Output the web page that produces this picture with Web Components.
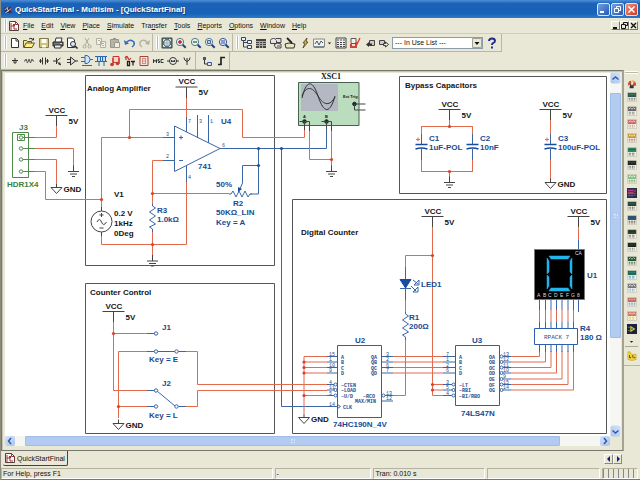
<!DOCTYPE html>
<html lang="en">
<head>
<meta charset="utf-8">
<title>QuickStartFinal - Multisim</title>
<style>
html,body{margin:0;height:100%}
body{--face:#e9e7d6;--line:#b3b09c;font:7px "Liberation Sans",Arial,sans-serif;color:#111;background:var(--face)}
</style>
</head>
<body>
<sim-app></sim-app>
<script>
const base = `*{box-sizing:border-box}
button{font:inherit;color:inherit;background:none;border:0;padding:0;margin:0;display:flex;align-items:center;justify-content:center}
svg{display:block}`;
function define(name, css, html, setup) {
  const t = document.createElement('template');
  customElements.define(name, class extends HTMLElement {
    constructor() {
      super();
      t.innerHTML = `<style>${base}${css}</style>${typeof html === 'function' ? html(this) : html}`;
      this.attachShadow({mode: 'open'}).append(t.content.cloneNode(true));
      if (setup) setup(this);
    }
  });
}

/* ---- icons, 12 x 12 ---- */
const lens = (inner, c = '#56738c') => `<circle cx="5" cy="5" r="3.6" fill="#eef4f4" stroke="${c}"/><path d="M7.7 7.7l3 3" stroke="#27407c" stroke-width="2"/>${inner}`;
const gate = c => `<path d="M0 2.500h4M0 6.500h4M8 4.500h4M1 10.500h10" stroke="${c}" fill="none"/><path d="M4 .500h2q3 1 3 4t-3 4h-2z" fill="#d4e5f7" stroke="${c}"/>`;
const icons = {
  app: '<path d="M1 4l3-2 2 2 3-2 2 2-2 2 2 3-4 1-2-2-3 1z" fill="#26336f"/><path d="M2 6l3-3 1 4 4-3M3 9l4-2" stroke="#ffe5a0" fill="none"/><path d="M8 6l2-1" stroke="#df3a32" stroke-width="2"/>',
  doc: '<path d="M1.500 1.500h6l3 3v6h-9z" fill="#fffdf8" stroke="#553b3b"/><path d="M7.500 1.500v3h3M3 3v7M3 6h3v3h3" fill="none" stroke="#a22e38"/><path d="M5 4h2v2h-2z" fill="#a22e38"/>',
  new: '<path d="M2.500 1.500h5l2 2v7h-7z" fill="#fff" stroke="#333"/><path d="M7 1.500v2.500h3" fill="none" stroke="#333"/>',
  open: '<path d="M.5 10.500v-7h3l1 1h4v1.500" fill="#f7e58a" stroke="#5f5520"/><path d="M1 10.500l2-4.500h8.500l-2.500 4.500z" fill="#fff08b" stroke="#5f5520"/><path d="M6 2q2-2 4 .5M10.500 1v2h-2" fill="none" stroke="#333"/>',
  save: '<path d="M1.500 1.500h9v9h-9z" fill="#cfc37c" stroke="#86784d"/><path d="M3.500 2h5v4h-5z" fill="#fff"/><path d="M4 8h4v2.500h-4z" fill="#fffbe0"/>',
  print: '<path d="M3 5l1-4h6l-1 4" fill="#fff" stroke="#333"/><path d="M1 5h10v4h-10z" fill="#777" stroke="#222"/><path d="M2.500 8h6.500v3h-6.500z" fill="#eee" stroke="#333"/><path d="M8 6.500h2" stroke="#f3db42"/>',
  preview: '<path d="M1.500 1h5l2 2v7.500h-7z" fill="#fff" stroke="#333"/><circle cx="7" cy="7" r="2.500" fill="#dbeaf3" stroke="#334"/><path d="M9 9l2.500 2.500" stroke="#223" stroke-width="1.500"/>',
  cut: '<path d="M4 1l4 7M8 1l-4 7" stroke="#aaa99e" fill="none"/><circle cx="3.500" cy="9.500" r="1.500" fill="none" stroke="#aaa99e"/><circle cx="8.500" cy="9.500" r="1.500" fill="none" stroke="#aaa99e"/>',
  copy: '<path d="M1.500 1.500h5v6h-5zM5.500 4.500h5v6h-5z" fill="#f3f1e7" stroke="#b3b1a4"/><path d="M7 6.500h2M7 8.500h2M3 3.500h2" stroke="#b3b1a4"/>',
  paste: '<path d="M1.500 2.500h8v8h-8z" fill="#b6b4a6" stroke="#999789"/><path d="M4 1h3v2h-3z" fill="#999789"/><path d="M5.500 5.500h5v5h-5z" fill="#efede3" stroke="#999789"/>',
  undo: '<path d="M2 6q4-5 8-1 1 3-2 5" fill="none" stroke="#3a6bb5" stroke-width="1.500"/><path d="M0 3l1 5 4-1.500z" fill="#3a6bb5"/>',
  redo: '<path d="M10 6q-4-5-8-1-1 3 2 5" fill="none" stroke="#b1afa4" stroke-width="1.300"/><path d="M12 3l-1 5-4-1.500z" fill="#b1afa4"/>',
  full: '<path d="M1 1h10v10h-10z" fill="#5d7880" stroke="#3a4b52"/><path d="M4 4h4v4h-4z" fill="#a9c0c3" stroke="#d5e0e0"/><path d="M2.500 4V2.500H4M8 2.500h1.500V4M9.500 8v1.500H8M4 9.500H2.500V8" fill="none" stroke="#dfe8e8"/>',
  zin: lens('<path d="M3 5h4M5 3v4" stroke="#c3262b" stroke-width="1.500"/>'),
  zout: lens('<path d="M3 5h4" stroke="#278b3b" stroke-width="1.500"/>'),
  zarea: lens('<path d="M3.500 3.500h3v3h-3z" fill="#b4d3dc" stroke="#3f68a7"/>'),
  zfit: lens('<path d="M3 4h4M3 6h4" stroke="#283fa7"/>', '#30519d'),
  tree: '<path d="M.5 .5h4v3h-4zM6.500 3.500h4v3h-4zM6.500 8.500h4v3h-4z" fill="#e9f2fc" stroke="#32475f"/><path d="M2.500 4v6h4M2.500 5.500h4" fill="none" stroke="#32475f"/>',
  sheet: '<path d="M1 2h10v9h-10z" fill="#444"/><path d="M1 4.500h10M1 6.500h10M1 8.500h10M4.500 4v7M7.500 4v7" stroke="#a9a99d"/>',
  db: '<ellipse cx="3.500" cy="3.500" rx="3" ry="2" fill="#eee" stroke="#445"/><path d="M.5 3.500v3h6v-3M6 1.500h5v4h-5M4 8l3-2 4 1v4h-5z" fill="#e8e4cb" stroke="#445"/><path d="M7 9h3" stroke="#456"/>',
  pen: '<path d="M1 7l4-1 6 1-1 4h-8z" fill="#ece5c3" stroke="#333"/><path d="M3 1l5 5" stroke="#222" stroke-width="1.800"/>',
  bolt: '<path d="M8 1L4 6h2l-2 5 5-6H7z" fill="#e0c342" stroke="#4b3b24" stroke-width=".8"/>',
  chart: '<path d="M.5 2h11v8h-11z" fill="#f3f3ec" stroke="#888"/><path d="M2 7l2-3 2 4 2-4 2 2M1 10h10" fill="none" stroke="#3e5968"/>',
  pad: '<path d="M1 1h10v10h-10z" fill="#eee" stroke="#444"/><path d="M2 3h8M2 5.500h8M2 7.500h8M2 9.500h8" stroke="#444" stroke-dasharray="2 1"/>',
  erc: '<path d="M2 1.500h5v5h-5z" fill="#eee" stroke="#655"/><path d="M2 7v3h5V7" fill="none" stroke="#d44236" stroke-width="2"/><path d="M7 5l1 2 3-6" fill="none" stroke="#d23832" stroke-width="1.300"/>',
  back: '<path d="M5.500 3.500h5v5h-5z" fill="#ccc" stroke="#444"/><path d="M2 7.500l3-2.500v1.500h3v2h-3V10z" fill="#333"/>',
  fwd: '<path d="M1.500 3.500h5v4h-5z" fill="#ccc" stroke="#444"/><path d="M5.500 6.500h2V5l3 2.500-3 2.500V8.500h-2z" fill="#efefdf" stroke="#333"/>',
  help: '<path d="M3 4q0-2.500 3-2.500t3 2.500q0 1.500-2 2.200-1 .5-1 1.800M6 9.500v2" fill="none" stroke="#1d2b84" stroke-width="1.900"/>',
  src: '<path d="M6 3v3M3 5.500h6M4 7h4M6 7v2" stroke="#333" fill="none"/>',
  res: '<path d="M1 6h1l1-2 1.500 4 1.500-4 1.500 4 1.500-4 1 2h1" fill="none" stroke="#555"/>',
  diode: '<path d="M1 6h3M4.500 2.500v7M7.500 2.500v7M8 6h3M2.500 4v4M9.500 4v4" stroke="#333" fill="none"/>',
  trans: '<path d="M1 6h3M4.500 3v6M4.500 6l4-3M4.500 6l4 4" stroke="#333" fill="none"/><path d="M9 10.500L6 9l2-2z" fill="#333"/>',
  analog: '<path d="M4.500 2v8l5-4zM1 4.500h3M1 7.500h3M9 6h3" fill="#ddd" stroke="#333"/>',
  ttl: gate('#3469b0'),
  cmos: '<path d="M0 1.500h12M0 6.500h12" stroke="#2865ae"/><path d="M2.500 1.500h3v5h-3zM7.500 1.500h3v5h-3z" fill="#bfddf7" stroke="#2865ae"/><path d="M4 7v4M9 7v4" stroke="#2865ae"/>',
  misc: '<path d="M4 1.500h6v6h-6z" fill="#f8d4ce" stroke="#c5392e"/><path d="M4 3v7M10 3v6" stroke="#c5392e" stroke-width="1.300"/><circle cx="3" cy="9.500" r="1.800" fill="#c5392e"/><circle cx="8.500" cy="8.500" r="1.800" fill="#c5392e"/>',
  mixed: '<path d="M1 3q2-3 3 0t3 0M2 1v4" fill="none" stroke="#c53a2f" stroke-width="1.300"/><path d="M3.500 6.500h2v4h-2zM7 6.500h4M9 6.500v4" fill="none" stroke="#321d1d" stroke-width="1.300"/>',
  ind: '<path d="M2 1.500h8v9h-8z" fill="#f8e0da" stroke="#a34537"/><path d="M4.500 3v6M7.500 3v6M4 3.500h4M4 6h4M4 8.500h4" stroke="#ca9281"/>',
  msc: '<path d="M1.500 8V4.500l1.500 2 1.500-2V8M7.500 4.500H6v1.500h1.500v1.500H6M11.500 4.500H9v3h2.500" fill="none" stroke="#333"/>',
  motor: '<circle cx="6" cy="6" r="3.500" fill="#eee" stroke="#333"/><path d="M0 6h3M9 6h3M4.500 7V5l1.500 2 1.500-2v2" fill="none" stroke="#333"/>',
  rf: '<path d="M6 10V3M3 2.500q0 3 3 4 3-1 3-4" fill="none" stroke="#333"/>',
  hier: '<path d="M2 2h3v3h-3z" fill="#3c559a"/><path d="M3.500 5v4h3" stroke="#333" fill="none"/><path d="M6.500 7.500h4v3h-4z" fill="#dce6f3" stroke="#3c559a"/>',
  bus: '<path d="M3 9.500h3V2.500h4" fill="none" stroke="#222" stroke-width="1.700"/>',
  down: '<path d="M3 5h6l-3 3z" fill="#222"/>'
};
const inst = [['#d84b34','#e7b650','#333'],['#355','#3e8f63','#555'],['#666','#ddd','#777'],['#c66','#eee','#a66'],['#c93','#efe','#a55'],['#386','#154','#567'],['#222','#363','#111'],['#8b8','#efe','#484'],['#519','#a3a','#232'],['#243','#466','#111'],['#357','#155','#333'],['#343','#132','#666'],['#222','#253','#555'],['#253','#bdb','#232'],['#264','#3d84ba','#39b'],['#777','#eef','#3c86c4'],['#c65','#bcd','#4787c3'],['#c76','#eee','#eac34c'],['#152238','#e9b522','#204f87']];
inst.forEach((c, i) => icons['i' + i] = i === 0
  ? '<path d="M1 8q0-6 4-6v4z" fill="#d84b34"/><path d="M7 2q4 0 4 6H8z" fill="#d84b34"/><path d="M4 5l2 3 2-3v6H3z" fill="#383038"/><path d="M6 2l3 2" stroke="#e9b84c" stroke-width="2"/>'
  : i === 8 ? '<path d="M0 0h12v12H0z" fill="#302a3c"/><path d="M1 2h7v2H1z" fill="#b43a9b"/><path d="M1 5h7v2H1z" fill="#d24472"/><path d="M1 8h7v2H1z" fill="#4a54ad"/><path d="M9.500 2v8" stroke="#aaa" stroke-dasharray="1 1"/>'
  : i === 18 ? '<path d="M0 0h12v12H0z" fill="#182440"/><path d="M4 2l6 4-6 4z" fill="#ecc02d"/><path d="M1 4h3M1 8h3" stroke="#4fa06a"/><path d="M5 5h2v2H5z" fill="#225b99"/>'
  : `<path d="M.5 .5h11v11h-11z" fill="#f5f3e7" stroke="#c9c7b9"/><path d="M1 1h10v5H1z" fill="${c[0]}"/><path d="M2 4l2-2 2 2 2-2 2 2" fill="none" stroke="${c[1]}"/><path d="M2 7.500h8M2 9.500h8" stroke="${c[2]}" stroke-dasharray="${1 + i % 3} 1"/>`);
icons.lab = '<path d="M1 1h3l1 3h6v6q-5 3-10 0z" fill="#f0d13b" stroke="#bd9a25" stroke-width=".6"/><path d="M3 5v3h2M7 5v3M8 8h2" stroke="#333" fill="none"/>';

define('ui-icon', ':host{display:block;width:12px;height:12px}svg{width:100%;height:100%}',
  el => `<svg viewBox="0 0 12 12" fill="none" aria-hidden="true">${icons[el.getAttribute('name')]}</svg>`);

define('title-bar', `:host{display:flex;align-items:center;height:18px;flex:none;gap:1px;padding:1px 2px 0 2px;background:linear-gradient(#4c8fd9,#1b62b5 20%,#1763b8 75%,#2c7aca);color:#fff;font-weight:700;font-size:8px}
h1{font:inherit;margin:0;flex:1;padding-left:1px;white-space:nowrap;text-shadow:1px 1px #123f80}
ui-icon{width:10px;height:10px}
button{width:13px;height:13px;border:1px solid #d5e5f8;border-radius:2px;background:linear-gradient(135deg,#6fa0e4,#2458b5)}
button.x{background:linear-gradient(135deg,#f0917b,#cf3a20)}`,
`<ui-icon name="app"></ui-icon><h1>QuickStartFinal - Multisim - [QuickStartFinal]</h1>
<button aria-label="Minimize"><svg width="9" height="9"><path d="M1 7h4" stroke="#fff" stroke-width="2"/></svg></button>
<button aria-label="Restore"><svg width="9" height="9" fill="none" stroke="#fff"><path d="M3.500 3V1.500h4v4h-2M1.500 3.500h4v4h-4z"/></svg></button>
<button class="x" aria-label="Close"><svg width="9" height="9"><path d="M1.500 1.500l6 6M7.500 1.500l-6 6" stroke="#fff" stroke-width="1.500"/></svg></button>`);

define('menu-bar', `:host{display:flex;align-items:center;height:16px;flex:none;padding:0 2px 0 3px;border-bottom:1px solid #cfccba}
tool-grip{margin-right:1px}ui-icon{margin-right:3px}
nav{display:flex;flex:1;gap:7px}u{text-decoration-thickness:1px;text-underline-offset:1px}
.w{width:9px;height:9px;border:1px solid;border-color:#fff #777 #777 #fff}`,
`<tool-grip></tool-grip><ui-icon name="doc"></ui-icon><nav>${['File','Edit','View','Place','Simulate','Tra_nsfer','Tools','Reports','Options','Window','Help'].map(s => {
  const i = s.indexOf('_'), t = s.replace('_', ''), k = i > 0 ? i : 0;
  return `<button><span>${t.slice(0, k)}<u>${t[k]}</u>${t.slice(k + 1)}</span></button>`;
}).join('')}</nav>
<button class="w" aria-label="Minimize sheet"><svg width="7" height="7"><path d="M1 6h4" stroke="#111" stroke-width="2"/></svg></button>
<button class="w" aria-label="Restore sheet"><svg width="7" height="7" fill="none" stroke="#111"><path d="M2.500 2.500v-2h4v3h-2M.5 2.500h4v4h-4z"/></svg></button>
<button class="w" aria-label="Close sheet"><svg width="7" height="7"><path d="M1 1l5 5M6 1l-5 5" stroke="#111" stroke-width="1.300"/></svg></button>`);

define('tool-grip', ':host{display:block;width:3px;height:13px;flex:none;border:solid #fff;border-width:0 1px;background:#bcb9a7}', '');
define('tool-group', `:host{display:flex;align-items:center;height:18px;flex:none;border:solid #b9b6a4;border-width:0 1px 1px 0;padding:0 1px 0 3px;gap:1px}
.i{display:flex;align-items:center;justify-content:space-between;width:var(--w)}
button{width:14px;height:14px}button.s{width:7px}.s ui-icon{width:7px}`,
el => (el.hasAttribute('nogrip') ? '' : '<tool-grip></tool-grip>') + `<div class="i">${el.getAttribute('icons').split(' ').map(n => `<button aria-label="${n}"${n === 'down' ? ' class="s"' : ''}><ui-icon name="${n}"></ui-icon></button>`).join('')}</div><slot></slot>`);

define('tool-bars', `:host{display:block;flex:none}
div{display:flex;height:18px}
.a,.b,.c,.d{--w:143px}.b{--w:71px}.c{--w:151px}.d{--w:186px}.e{--w:28px;padding-left:4px}
select{appearance:none;width:91px;height:12px;font:7px "Liberation Sans",Arial,sans-serif;color:#111;background:#fff;border:1px solid #8a9cab;border-radius:0;padding:0 2px;margin:0;display:block}
label{display:grid;align-items:center}label>*{grid-area:1/1}
label svg{justify-self:end;margin-right:1px;pointer-events:none}
button{width:16px;height:14px}`,
`<div><tool-group class="a" icons="new open save print preview cut copy paste undo redo"></tool-group>
<tool-group class="b" icons="full zin zout zarea zfit"></tool-group>
<tool-group class="c" icons="tree sheet db pen bolt chart down pad erc back fwd"><label><select aria-label="In use"><option>--- In Use List ---</option></select><svg width="10" height="10"><path d="M.5 .5h9v9h-9z" fill="#e9e7d6" stroke="#a5a391"/><path d="M2.500 4h5l-2.500 3z" fill="#111"/></svg></label><button aria-label="Help"><ui-icon name="help"></ui-icon></button></tool-group></div>
<div><tool-group class="d" icons="src res diode trans analog ttl cmos misc mixed ind msc motor rf"></tool-group><tool-group class="e" nogrip icons="hier bus"></tool-group></div>`);

/* ---- schematic drawing ---- */
const R = '#e26b4e', B = '#3b66a6', K = '#444';
const wire = (c, ...d) => `<path d="${d.join('')}" stroke="${c}"/>`;
const dots = (c, ...p) => p.map(([x, y]) => `<circle cx="${x}" cy="${y}" r="1.600" fill="${c}" stroke="none"/>`).join('');
const T = (x, y, s, k = 'k') => `<text x="${x}" y="${y}" class="${k}">${s}</text>`;
const vcc = (x, y) => wire(K, `M${x - 11} ${y}h22M${x} ${y}v11`) + T(x - 8, y - 3, 'VCC') + T(x + 12, y + 8, '5V');
const earth = (x, y) => wire(K, `M${x} ${y - 6}v6M${x - 5.5} ${y}h11M${x - 3.5} ${y + 2.5}h7M${x - 1.5} ${y + 5}h3`);
const gnd = (x, y) => wire(K, `M${x} ${y - 4}v4M${x - 5.5} ${y}h11l-5.500 6z`) + T(x + 7, y + 4, 'GND');
const ring = (x, y, c = B, r = 1.7) => `<circle cx="${x}" cy="${y}" r="${r}" stroke="${c}" fill="#fff"/>`;
const resV = (x, y) => wire(B, `M${x} ${y}v2l3 2-6 4 6 4-6 4 6 4-6 3 3 2v3`);
const cap = x => wire(R, `M${x} 126v8M${x} 159v13`) + wire(B, `M${x} 134v10M${x} 149v11`) + `<path d="M${x - 6} 144.500h12M${x - 6} 149q6-2 12 0" stroke="#174d9e" stroke-width="1.500"/>`;
const rows = [356.5, 362, 367.5, 373];
const segX = [539.5, 545.5, 551, 556.5, 562, 568, 573.5];
let s = '';
s += `<g stroke="#555"><path d="M85.500 75.500h189v190h-189zM399.500 76.500h207v117h-207zM292.500 199.500h314v234h-314zM85.500 283.500h189v150h-189z"/></g>`;
s += T(87, 91, 'Analog Amplifier') + T(405, 88, 'Bypass Capacitors') + T(301, 235, 'Digital Counter') + T(90, 295, 'Counter Control');
/* connector J3 */
s += wire('#4e8a4b', 'M12.500 132.500h16v45h-16zM17.500 134.500h7v6h-7z', 'M23 137.500h12M23 148.500h12M23 159.500h12M23 171.500h12') + [137.5, 148.5, 159.5, 171.5].map(y => ring(21, y, '#4e8a4b')).join('')
  + T(19, 130, 'J3', 'g') + T(7, 187, 'HDR1X4', 'g') + vcc(56.5, 115.5)
  + wire(R, 'M35 137.500h21.500v-11M35 148.500h38.500v18M35 159.500h21.500v24M35 171.500h10.500v28h56') + earth(73.5, 171.5) + gnd(56.5, 187.5);
/* amplifier */
s += wire(R, 'M101.500 208V137.500H163M129.500 137.500V109.500H242.500V137.500H304.500V133M101.500 234V244.500H186.500V182M163 160.500H152.500V205M152.500 193.500H229M152.500 230V255M186.500 98V117')
  + `<circle cx="101.500" cy="221.500" r="10.500" stroke="${K}"/>` + wire(K, 'M101.500 207v4M101.500 232v4M99.500 215h4M101.500 213v4M99.500 228h4M97 222q2.500-5 4.500 0t5 0')
  + T(114, 197, 'V1') + T(114, 216, '0.2 V') + T(114, 226, '1kHz') + T(114, 236, '0Deg')
  + vcc(186.5, 87) + wire(B, 'M174.500 126v45.500l45.500-23zM163 137.500h11M163 160.500h11M220 148.500h11M186.500 117v15M186.500 166v16M197.500 115v23M208.500 115v28M179 137.500h4M181 135.500v4M179 160.500h4')
  + T(166, 136, '3', 'p') + T(166, 158, '2', 'p') + T(188, 123, '7', 'p') + T(199, 123, '3', 'p') + T(210, 123, '1', 'p') + T(188, 179, '4', 'p') + T(222, 147, '6', 'p')
  + T(221, 124, 'U4', 'b') + T(198, 169, '741', 'b') + resV(152.5, 204) + T(157, 213, 'R3', 'b') + T(157, 222, '1.0kΩ', 'b') + earth(152.5, 261)
  + wire(B, 'M231 148.500H326.500V125M258.500 148.500v45.500h-8M258.500 165.500H242.500V183l-3 7M229 194h2l2-3 3 6 3-6 3 6 3-6 3 6 2-3h2M281.500 148.500V406.500H327') + '<path d="M238 192v-5l4 2z" fill="#174d9e"/>'
  + T(216, 187, '50%', 'b') + T(233, 206, 'R2', 'b') + T(216, 215, '50KΩ_LIN', 'b') + T(216, 225, 'Key = A', 'b')
  + dots('#d9412b', [129.5, 137.5], [101.5, 199.5], [152.5, 193.5], [152.5, 244.5]) + dots('#254f9a', [258.5, 148.5], [258.5, 165.5], [281.5, 148.5]);
/* oscilloscope */
s += '<path d="M298.500 82.500h60.500v43h-60.500z" fill="#b9ddbd" stroke="#476152"/><path d="M301 84h37v27h-37z" fill="#b3b8c2"/><path d="M302 98C306 81 312 78 318 96S330 114 335 96M302 96C306 86 312 86 318 96S330 106 335 97" stroke="#333"/>'
  + T(321, 79, 'XSC1', 'x') + T(343, 98, 'Ext Trig', 't') + T(303, 118, 'A', 't') + T(325, 118, 'B', 't')
  + [[304.5, 121.5], [326.5, 121.5], [354.5, 104]].map(p => `<circle cx="${p[0]}" cy="${p[1]}" r="1.800" fill="#222" stroke="#222"/>`).join('')
  + wire(K, 'M304.500 121v10M309.500 131V121.500h-10M326.500 121v8M331.500 131V121.500h-10M354.500 104h11M354.500 104v6h11') + wire(R, 'M304.500 130v7M309.500 131V159.500H331.500M331.500 131V166') + earth(331.5, 171.5) + dots('#d9412b', [331.5, 159.5]);
/* capacitors */
s += vcc(449.5, 109.5) + vcc(550.5, 109.5) + wire(R, 'M449.500 120v6M421.500 126.500h51M421.500 171.500h51M449.500 171.500v6M550.500 120v8M550.500 170v10M416 139.500h4M418 137.500v4M545 139.500h4M547 137.500v4')
  + cap(421.5) + cap(472.5) + cap(550.5) + earth(449.5, 182.5) + gnd(550.5, 182.5) + dots('#d9412b', [449.5, 126.5], [449.5, 171.5])
  + T(429, 141, 'C1', 'b') + T(429, 150, '1uF-POL', 'b') + T(480, 141, 'C2', 'b') + T(480, 150, '10nF', 'b') + T(558, 141, 'C3', 'b') + T(558, 150, '100uF-POL', 'b');
/* counter control */
s += vcc(113.5, 311.5) + wire(R, 'M113.500 322V390.500H147M113.500 333.500H147M147 351.500H118.500V418M118.500 406.500H147M186 351.500H197.500V384.500H327M186 406.500H197.500V390.500H327') + gnd(118.5, 423.5)
  + wire(B, 'M147 333.500h9M147 351.500h39M147 390.500h9M147 406.500h9M176 406.500h10M157 391l18 15') + [[156, 333.5], [156, 351.5], [176.5, 351.5], [156, 390.5], [156, 406.5], [176.5, 406.5]].map(p => ring(...p)).join('')
  + dots('#d9412b', [113.5, 333.5], [118.5, 406.5]) + T(162, 330, 'J1', 'b') + T(149, 362, 'Key = E', 'b') + T(162, 386, 'J2', 'b') + T(149, 418, 'Key = L', 'b');
/* digital counter */
s += vcc(432.5, 216.5) + vcc(578.5, 216.5) + wire(R, 'M432.500 227V395.500H443M432.500 384.500H443M432.500 390H443M432.500 255.500H405.500V268M405.500 299V313M405.500 338V395.500H393M304 356.500V413M304 395.500H327')
  + rows.map(y => wire(R, `M304 ${y}H327M393 ${y}H443`) + wire(B, `M327 ${y}h10M382 ${y}h11M443 ${y}h12`)).join('') + resV(405.5, 312)
  + wire(B, 'M405.500 267v33M400 288.500h11M327 384.500h8M327 390h8M327 395.500h8M327 406.500h10M383 395.500h10M382 401h11M443 384.500h9M443 390h9M443 395.500h9') + '<path d="M400 279.500h11l-5.500 8.500z" fill="#174d9e" stroke="#174d9e"/>'
  + wire(B, 'M413 280l5 4M419 280v5h-5zM411 286l5 5M418 287v5h-5z')
  + dots('#d9412b', [432.5, 255.5], [432.5, 384.5], [432.5, 390], [304, 362], [304, 367.5], [304, 373], [304, 395.5]) + gnd(304, 417.5)
  + `<g fill="#fff" stroke="#2d5faa"><path d="M337.500 345.500h44v72h-44zM455.500 345.500h44v60h-44zM534.500 328.500h43v16h-43z"/></g>`
  + T(421, 287, 'LED1', 'b') + T(409, 320, 'R1', 'b') + T(409, 329, '200Ω', 'b') + T(355, 343, 'U2', 'b') + T(333, 427, '74HC190N_4V', 'b') + T(472, 343, 'U3', 'b') + T(461, 416, '74LS47N', 'b');
['A', 'B', 'C', 'D'].forEach((c, i) => { const y = rows[i] + 2; s += T(341, y, c, 'm') + T(371, y, 'Q' + c, 'm') + T(459, y, c, 'm'); });
[['15', 356.5], ['1', 362], ['10', 367.5], ['9', 373], ['4', 384.5], ['11', 390], ['5', 395.5], ['14', 406.5]].forEach(([n, y]) => s += T(329, y - 1, n, 'p'));
[['3', 356.5], ['2', 362], ['6', 367.5], ['7', 373], ['13', 395.5], ['12', 401]].forEach(([n, y]) => s += T(386, y - 1, n, 'p'));
[['7', 356.5], ['1', 362], ['2', 367.5], ['6', 373], ['3', 384.5], ['5', 390], ['4', 395.5]].forEach(([n, y]) => s += T(446, y - 1, n, 'p'));
s += [384.5, 390, 395.5].map(y => ring(335.5, y, B, 1.5) + ring(453.5, y, B, 1.5)).join('') + ring(383.5, 395.5, B, 1.5) + wire(B, 'M337.500 404.500l3 2-3 2')
  + T(341, 386.5, '~CTEN', 'm') + T(341, 392, '~LOAD', 'm') + T(341, 397.5, '~U/D', 'm') + T(363, 397.5, '~RCO', 'm') + T(355, 403, 'MAX/MIN', 'm') + T(343, 408.5, 'CLK', 'm')
  + T(459, 386.5, '~LT', 'm') + T(459, 392, '~RBI', 'm') + T(459, 397.5, '~BI/RBO', 'm');
segX.forEach((x, i) => {
  const y = [356.5, 362, 367.5, 373, 379, 384.5, 390][i];
  s += wire(R, `M511 ${y}H${x}V351M${x} 310v12`) + wire(B, `M502 ${y}h9M${x} 345v7M${x} 300v10M${x} 322v6`) + ring(501.5, y, B, 1.5) + T(489, y + 2, 'O' + 'ABCDEFG'[i], 'm') + T(503, y - 1, ['13', '12', '11', '10', '9', '15', '14'][i], 'p');
});
s += wire(B, 'M578.500 300v12M578.500 240v10') + wire(R, 'M578.500 227v13') + T(544, 339, 'RPACK 7', 'm6') + T(580, 331, 'R4', 'b') + T(580, 340, '180 Ω', 'b') + T(587, 278, 'U1', 'b')
  + '<path d="M534.500 249.500h50v50h-50z" fill="#000" stroke="#777"/><path d="M549 256h21l-2 3h-17zM549 291h21l-2-3h-17zM547 258l2 3v11l-2 2zM572 258l-2 3v11l2 2zM547 289l2-3v-9l-2-2zM572 289l-2-3v-9l2-2z" fill="#22b5ee" stroke="#22b5ee" stroke-width=".5"/>'
  + T(575, 255, 'CA', 'w') + [...'ABCDEFG8'].map((c, i) => T(537 + Math.round(i * 5.7), 297, c, 'w')).join('');

define('circuit-sheet', `:host{display:block;background:#fff;overflow:hidden;min-width:0}
text{font:700 8px "Liberation Sans",Arial,sans-serif;stroke:none;fill:#151515}
.b{fill:#174b92}.g{fill:#3f7f3c}
.p{font:5px "Liberation Mono",monospace;fill:#234f90}
.m{font:700 5px "Liberation Mono",monospace;fill:#234f90}.m6{font:6px "Liberation Mono",monospace;fill:#234f90}
.x{font:700 8px "Liberation Serif",serif}.t{font:700 4px "Liberation Sans",sans-serif}
.w{font:5px "Liberation Sans",sans-serif;fill:#ddd}`,
`<svg width="604" height="363" viewBox="5 73 604 363" fill="none" role="img" aria-label="Counter circuit schematic">${s}</svg>`);

define('scroll-bar', `:host{display:flex;background:#f6f6f2;min-width:0;min-height:0}
:host([vertical]){flex-direction:column}
button{flex:0 0 10px;min-width:10px;min-height:10px;background:linear-gradient(135deg,#d4e2fb,#aac4ee);border-radius:2px}
:host([vertical]) .k{transform:rotate(90deg)}
.pre{flex:0 0 10px}.thumb{flex:var(--t);background:#b2cbf0;border:1px solid #a1bce6;border-radius:1px;display:flex;align-items:center;justify-content:center}
.thumb i{width:4px;height:4px;border:1px dotted #d8e7fc}.post{flex:var(--p)}`,
`<button aria-label="Back" class="k"><svg width="8" height="8"><path d="M5 1L2.500 4L5 7" fill="none" stroke="#315aa0" stroke-width="1.500"/></svg></button><div class="pre"></div><div class="thumb"><i></i></div><div class="post"></div><button aria-label="Forward" class="k"><svg width="8" height="8"><path d="M3 1l2.500 3L3 7" fill="none" stroke="#315aa0" stroke-width="1.500"/></svg></button>`);

define('instrument-bar', `:host{display:flex;flex-direction:column;align-items:center;height:296px;width:16px;flex:none;border-bottom:1px solid #b9b6a4;padding:1px 1px 3px 0}
.g{width:13px;height:3px;border:solid #fff;border-width:1px 0;background:#bcb9a7}
.i{flex:1;display:flex;flex-direction:column;justify-content:space-between;padding:3px 0 1px}
button{width:13px;height:13px}ui-icon{width:10px;height:10px}hr{width:13px;border:0;border-top:1px solid #aaa796;margin:0 0 2px}
.d{height:9px}.d ui-icon{width:7px;height:7px}`,
`<div class="g"></div><div class="i">${inst.map((_, i) => `<button aria-label="Instrument ${i + 1}"><ui-icon name="i${i}"></ui-icon></button>`).join('')}</div><button class="d" aria-label="More"><ui-icon name="down"></ui-icon></button><hr><button aria-label="LabVIEW"><ui-icon name="lab"></ui-icon></button>`);

define('sheet-tabs', `:host{display:flex;height:16px;flex:none;justify-content:space-between;align-items:start;padding:0 2px}
.t{height:15px;padding:0 2px 0 1px;gap:1px;border:solid #444;border-width:0 1px 1px 0;border-radius:0 0 2px 2px}
.n{display:flex;padding-top:3px}.n button{width:9px;height:10px;border:1px solid;border-color:#fff #888 #888 #fff}`,
`<button class="t"><ui-icon name="doc"></ui-icon>QuickStartFinal</button><div class="n"><button aria-label="Previous sheet"><svg width="6" height="6"><path d="M4 0v6L1 3z" fill="#152269"/></svg></button><button aria-label="Next sheet"><svg width="6" height="6"><path d="M2 0v6l3-3z" fill="#152269"/></svg></button></div>`);

define('status-bar', `:host{display:grid;grid-template-columns:272fr 97fr 112fr 113fr 36fr;gap:2px;height:13px;flex:none;padding:1px 2px 1px 0;border-bottom:1px solid #777;white-space:nowrap}
span{padding-left:1px;border:1px solid;border-color:#b5b29f #fff #fff #b5b29f;line-height:9px}
span:first-child{border-color:transparent;padding:0}
.l{background:repeating-linear-gradient(90deg,#888 0 1px,#e9e7d6 1px 5px)}`,
`<span>For Help, press F1</span><span>-</span><span>Tran: 0.010 s</span><span></span><span class="l"></span>`);

define('sim-app', `:host{display:flex;flex-direction:column;height:100vh;min-height:480px;overflow:hidden;background:var(--face);border-left:1px solid #8d8c80}
main{flex:1;display:flex;min-height:0}
.left{flex:1;display:flex;flex-direction:column;min-width:0}
.win{flex:1;display:grid;grid-template:minmax(0,1fr) 10px/minmax(0,1fr) 11px;min-height:0;border:1px solid #77766a;border-width:1px 2px 1px 1px;padding:2px 1px 4px 3px;border-right-color:#a5a290;box-shadow:inset 1px 1px #c7c4b1}
.win scroll-bar[vertical]{--t:244;--p:88}
.win scroll-bar:not([vertical]){--t:533;--p:40}`,
`<title-bar></title-bar><menu-bar></menu-bar><tool-bars></tool-bars>
<main><div class="left"><div class="win"><circuit-sheet></circuit-sheet><scroll-bar vertical></scroll-bar><scroll-bar></scroll-bar></div><sheet-tabs></sheet-tabs></div><instrument-bar></instrument-bar></main><status-bar></status-bar>`);
</script>
</body>
</html>
